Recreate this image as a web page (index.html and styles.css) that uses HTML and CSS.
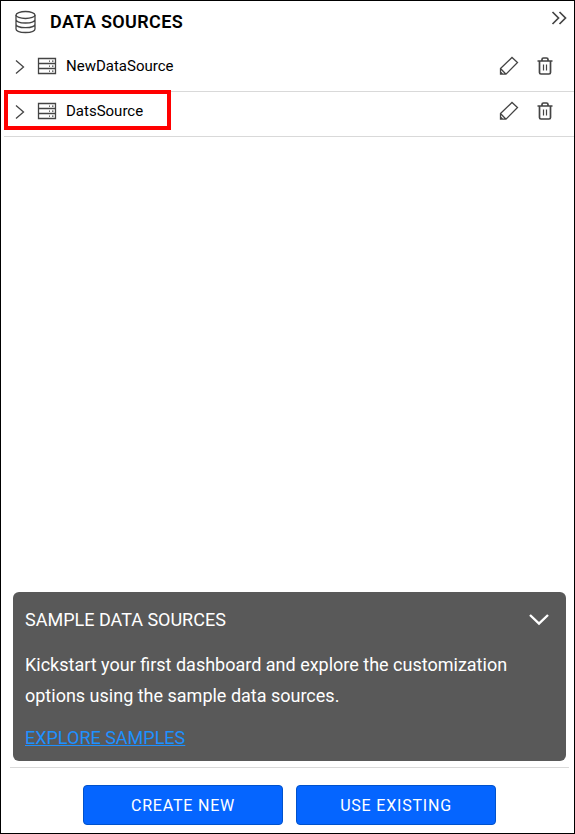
FILE: index.html
```html
<!DOCTYPE html>
<html lang="en">
<head>
<meta charset="utf-8">
<meta name="viewport" content="width=device-width, initial-scale=1">
<title>Data Sources</title>
<link rel="stylesheet" href="styles.css">
</head>
<body>
<svg width="0" height="0" class="symbols" aria-hidden="true">
  <symbol id="chevron" viewBox="0 0 10 16"><path d="M1 2.500 8.500 9 1 15.500"/></symbol>
  <symbol id="server" viewBox="0 0 20 18"><path d="M1.500 1.500h17v15h-17zM1.500 6.500h17M1.500 11.500h17"/><path d="M12 4.200h1M15 4.200h1.500M15 9.200h1.500M12 9.200h1M12 14.200h1M15 14.200h1.500"/></symbol>
  <symbol id="pencil" viewBox="0 0 20 20"><path d="M1.500 12.500 13 1.500l5.500 5L7 18.200H1.500zM1.500 12.500l5.500 5.700M1.500 16l2.200 2.200"/></symbol>
  <symbol id="trash" viewBox="0 0 16 18"><path d="M.5 4h15M2.500 4v11.500q0 1.500 1.500 1.500h8q1.500 0 1.500-1.500V4M5 4V2.500Q5 1 6.500 1h3Q11 1 11 2.500V4"/><path class="thin" d="M6.500 7.500v6M9.500 7.500v6"/></symbol>
</svg>
<main class="panel">
  <header class="panel-header">
    <svg class="icon db-icon" viewBox="0 0 22 24" aria-hidden="true"><ellipse cx="11.500" cy="5" rx="9.500" ry="3.500"/><path d="M2 5v14c0 2 4 3.500 9.500 3.500s9.500-1.500 9.500-3.500V5M2 9.500c0 2 4 3.500 9.500 3.500s9.500-1.500 9.500-3.500M2 14.200c0 2 4 3.500 9.500 3.500s9.500-1.500 9.500-3.500"/></svg>
    <h1 class="title">DATA SOURCES</h1>
    <button class="icon-button collapse" type="button" aria-label="Collapse panel"><svg class="icon bold collapse-icon" viewBox="0 0 16 14" aria-hidden="true"><path d="M1.500 1l6 6-6 6M8.500 1l6 6-6 6"/></svg></button>
  </header>
  <ul class="sources">
    <li class="source">
      <button class="icon-button expand" type="button" aria-label="Expand NewDataSource"><svg class="icon chevron-icon"><use href="#chevron"/></svg></button>
      <svg class="icon server-icon" aria-hidden="true"><use href="#server"/></svg>
      <span class="name">NewDataSource</span>
      <button class="icon-button" type="button" aria-label="Edit NewDataSource"><svg class="icon pencil-icon"><use href="#pencil"/></svg></button>
      <button class="icon-button" type="button" aria-label="Delete NewDataSource"><svg class="icon bold trash-icon"><use href="#trash"/></svg></button>
    </li>
    <li class="source marked">
      <button class="icon-button expand" type="button" aria-label="Expand DatsSource"><svg class="icon chevron-icon"><use href="#chevron"/></svg></button>
      <svg class="icon server-icon" aria-hidden="true"><use href="#server"/></svg>
      <span class="name">DatsSource</span>
      <button class="icon-button" type="button" aria-label="Edit DatsSource"><svg class="icon pencil-icon"><use href="#pencil"/></svg></button>
      <button class="icon-button" type="button" aria-label="Delete DatsSource"><svg class="icon bold trash-icon"><use href="#trash"/></svg></button>
    </li>
  </ul>
  <section class="samples">
    <div class="samples-header">
      <h2 class="samples-title">SAMPLE DATA SOURCES</h2>
      <button class="icon-button" type="button" aria-label="Collapse samples"><svg class="icon samples-icon" viewBox="0 0 20 12" aria-hidden="true"><path d="M1 1 10 9.500l9-8.500"/></svg></button>
    </div>
    <p class="samples-text">Kickstart your first dashboard and explore the customization options using the sample data sources.</p>
    <a class="samples-link" href="#samples">EXPLORE SAMPLES</a>
  </section>
  <footer class="actions">
    <button class="action" type="button">CREATE NEW</button>
    <button class="action" type="button">USE EXISTING</button>
  </footer>
</main>
</body>
</html>
```
FILE: styles.css
```css
*,
*::before {
  box-sizing: border-box;
}

body {
  margin: 0;
  font-family: Roboto, "Liberation Sans", sans-serif;
  color: #000;
  background: #fff;
}

.symbols {
  position: absolute;
}

.panel {
  display: flex;
  flex-direction: column;
  min-height: 100vh;
  border: 1px solid #000;
}

.panel-header {
  display: flex;
  align-items: center;
  height: 42px;
  padding: 0 7px 0 13px;
}

.title {
  flex: 1;
  margin: 0 0 0 14px;
  font-size: 18px;
  font-weight: 600;
  line-height: 24px;
  letter-spacing: 0.02em;
}

.icon {
  display: block;
  flex: none;
  fill: none;
  stroke: #444;
  stroke-width: 1.3;
}

.bold {
  stroke-width: 1.7;
}

.thin {
  stroke-width: 1.2;
}

.db-icon {
  width: 22px;
  height: 24px;
}

.collapse-icon {
  width: 16px;
  height: 14px;
}

.chevron-icon {
  width: 10px;
  height: 16px;
}

.server-icon {
  width: 20px;
  height: 18px;
}

.pencil-icon {
  width: 20px;
  height: 20px;
}

.trash-icon {
  width: 16px;
  height: 18px;
}

.icon-button {
  flex: none;
  padding: 0;
  border: 0;
  background: none;
  cursor: pointer;
}

.collapse {
  align-self: flex-start;
  margin-top: 10px;
}

.sources {
  flex: 1;
  margin: 0 0 0 3px;
  padding: 4px 0 0;
  list-style: none;
}

.source {
  position: relative;
  display: flex;
  align-items: center;
  gap: 18px;
  height: 45px;
  padding: 0 21px 6px 11px;
  border-bottom: 1px solid #d9d9d9;
}

.expand {
  margin-right: -6px;
}

.name {
  flex: 1;
  margin-left: -9px;
  font-size: 15px;
  line-height: 20px;
}

.marked::before {
  content: "";
  position: absolute;
  top: -2px;
  left: 0;
  width: 167px;
  height: 40px;
  border: 4px solid #f00;
  pointer-events: none;
}

.samples {
  margin: 0 8px 6px 12px;
  padding: 12px;
  border-radius: 6px;
  background: #595959;
  color: #fff;
  font-size: 18px;
}

.samples-header {
  display: flex;
  align-items: center;
  justify-content: space-between;
  padding-right: 5px;
}

.samples-title {
  margin: 0;
  font-size: 18px;
  font-weight: 400;
  line-height: 31px;
}

.samples-icon {
  width: 20px;
  height: 12px;
  stroke: #fff;
  stroke-width: 2.4;
}

.samples-text {
  margin: 14px 0 16px;
  line-height: 31px;
}

.samples-link {
  display: block;
  width: fit-content;
  color: #1e90ff;
  line-height: 22px;
}

.actions {
  display: flex;
  justify-content: center;
  gap: 13px;
  margin: 0 5px 0 9px;
  padding: 17px 0 8px;
  border-top: 1px solid #d9d9d9;
}

.action {
  flex: 0 1 200px;
  height: 40px;
  border: 1px solid #0052cc;
  border-radius: 4px;
  background: #0565ff;
  color: #fff;
  font-family: inherit;
  font-size: 16px;
  letter-spacing: 0.05em;
  cursor: pointer;
}
```
